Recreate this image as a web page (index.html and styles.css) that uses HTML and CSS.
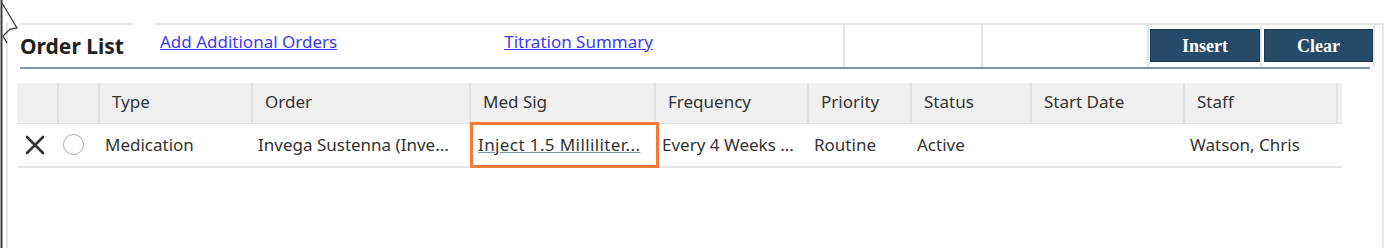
FILE: index.html
```html
<!DOCTYPE html>
<html lang="en">
<head>
  <meta charset="UTF-8">
  <title>Order List</title>
  <link rel="stylesheet" href="styles.css">
</head>
<body>

<svg class="cursor" width="30" height="248" viewBox="0 0 30 248">
  <line x1="1.5" y1="0" x2="1.5" y2="248" stroke="#3d3d3d" stroke-width="2"/>
  <polyline points="2,3 17,28 10,29 3,36 7,43" fill="none" stroke="#3d3d3d" stroke-width="1.3"/>
</svg>

<div class="panel">
  <div class="toolbar">
    <div class="cell title">Order List</div>
    <div class="cell gap"></div>
    <div class="cell links">
      <a href="#" class="link first">Add Additional Orders</a>
      <a href="#" class="link second">Titration Summary</a>
    </div>
    <div class="cell blank-a"></div>
    <div class="cell blank-b"></div>
    <div class="cell btn-cell"><button class="btn">Insert</button></div>
    <div class="cell btn-cell clear-cell"><button class="btn">Clear</button></div>
    <div class="cell end"></div>
  </div>
  <div class="rule"></div>

  <table class="orders">
    <colgroup>
      <col style="width:41px">
      <col style="width:41px">
      <col style="width:153px">
      <col style="width:218px">
      <col style="width:185px">
      <col style="width:153px">
      <col style="width:103px">
      <col style="width:120px">
      <col style="width:153px">
      <col style="width:153px">
      <col style="width:5px">
    </colgroup>
    <thead>
      <tr>
        <th></th>
        <th></th>
        <th>Type</th>
        <th>Order</th>
        <th>Med Sig</th>
        <th>Frequency</th>
        <th>Priority</th>
        <th>Status</th>
        <th>Start Date</th>
        <th>Staff</th>
        <th class="gutter"></th>
      </tr>
    </thead>
    <tbody>
      <tr>
        <td class="icon-x">
          <svg width="20" height="20" viewBox="0 0 20 20">
            <path d="M2 2 L18 18 M18 2 L2 18" stroke="#333" stroke-width="2.6" stroke-linecap="round"/>
          </svg>
        </td>
        <td class="icon-radio"><span class="radio"></span></td>
        <td>Medication</td>
        <td>Invega Sustenna (Inve...</td>
        <td class="medsig"><a href="#" class="sig">Inject 1.5 Milliliter...</a></td>
        <td class="freq">Every 4 Weeks ...</td>
        <td>Routine</td>
        <td>Active</td>
        <td></td>
        <td>Watson, Chris</td>
        <td></td>
      </tr>
    </tbody>
  </table>
</div>

</body>
</html>
```

FILE: styles.css
```css
body {
  margin: 0;
  background-color: #ffffff;
  font-family: 'Noto Sans', 'Open Sans', sans-serif;
  color: #333333;
  height: 248px;
  overflow: hidden;
  position: relative;
}
.cursor {
  position: absolute;
  top: 0;
  left: 0;
}
.panel {
  margin: 23px 0 0 6px;
  width: 1378px;
  height: 225px;
  box-sizing: border-box;
  border-left: 2px solid #e6e6e6;
  border-right: 2px solid #e6e6e6;
}
.toolbar {
  display: flex;
  margin-left: 12px;
  height: 44px;
}
.cell {
  box-sizing: border-box;
  height: 44px;
  border-top: 2px solid #e6e6e6;
  display: flex;
  align-items: center;
}
.title {
  width: 113px;
  font-size: 21px;
  font-weight: bold;
  color: #222222;
  padding-bottom: 1px;
}
.gap {
  width: 22px;
  border-top: none;
}
.links {
  width: 690px;
  border-right: 2px solid #e6e6e6;
  padding-bottom: 10px;
}
.link {
  font-size: 17px;
  color: #3b3bf2;
  text-decoration: underline;
}
.first {
  margin-left: 5px;
}
.second {
  margin-left: 167px;
}
.blank-a {
  width: 138px;
  border-right: 2px solid #e6e6e6;
}
.blank-b {
  width: 166px;
  border-right: 2px solid #e6e6e6;
}
.btn-cell {
  width: 113px;
  border-right: 2px solid #e6e6e6;
  align-items: flex-start;
  padding: 4px 0 0 1px;
}
.clear-cell {
  padding-left: 2px;
}
.end {
  flex: 1;
}
.btn {
  width: 110px;
  height: 33px;
  background-color: #254b69;
  border: 1px solid #1d3c55;
  color: #ffffff;
  font-family: 'Liberation Serif', serif;
  font-weight: bold;
  font-size: 18px;
  padding: 2px 0 0 0;
}
.rule {
  margin-left: 12px;
  width: 1350px;
  height: 2px;
  background-color: #7f97ab;
}
.orders {
  margin: 14px 0 0 9px;
  width: 1325px;
  table-layout: fixed;
  border-collapse: collapse;
  font-size: 17px;
}
.orders th {
  height: 37px;
  background-color: #f0f0f0;
  font-weight: normal;
  text-align: left;
  padding: 0 0 3px 12px;
  border-left: 2px solid #e2e2e2;
  border-bottom: 1px solid #e2e2e2;
  color: #333333;
  white-space: nowrap;
  overflow: hidden;
}
.orders th:first-child {
  border-left: none;
}
.orders th.gutter {
  padding: 0;
}
.orders td {
  height: 41px;
  padding: 0 0 1px 6px;
  white-space: nowrap;
  overflow: hidden;
  border-bottom: 2px solid #e6e6e6;
  color: #333333;
}
.orders td.icon-x {
  padding-left: 8px;
}
.icon-x svg {
  display: block;
}
.orders td.icon-radio {
  padding-left: 5px;
}
.radio {
  display: block;
  width: 19px;
  height: 19px;
  border: 1px solid #a8a8a8;
  border-radius: 50%;
}
.orders td.medsig {
  position: relative;
  overflow: visible;
  padding-left: 8px;
}
.medsig::after {
  content: "";
  position: absolute;
  left: 0;
  right: -4px;
  top: -2px;
  bottom: -2px;
  border: 3px solid #f47a3a;
}
.sig {
  color: #333333;
  text-decoration: underline;
  text-decoration-color: #7f97ab;
  letter-spacing: 0.4px;
}
.orders td.freq {
  padding-left: 7px;
}
```
